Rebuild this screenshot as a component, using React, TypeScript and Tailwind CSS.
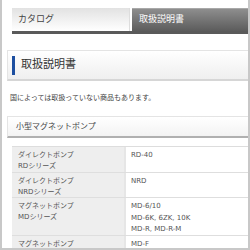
import React from 'react';

const rows = [
  { name: ['ダイレクトポンプ', 'RDシリーズ'], models: ['RD-40'], h: 'h-[26px]' },
  { name: ['ダイレクトポンプ', 'NRDシリーズ'], models: ['NRD'], h: 'h-[25px]' },
  { name: ['マグネットポンプ', 'MDシリーズ'], models: ['MD-6/10', 'MD-6K, 6ZK, 10K', 'MD-R, MD-R-M'], h: 'h-[38px]' },
  { name: ['マグネットポンプ'], models: ['MD-F'], h: 'h-[27px]' },
];

const App: React.FC = () => {
  return (
    <div className="w-[250px] h-[250px] overflow-hidden bg-white border-2 border-t-0 border-[#c8c8c8] font-['DejaVu_Sans','Noto_Sans_CJK_JP',sans-serif] text-[#555]">
      <div className="pl-[10px] pt-[8px]">
        <div className="flex gap-[2px] border-b-[3px] border-[#5a5a5a]">
          <div className="w-[118px] h-[23px] flex items-center pl-[6px] text-[9px] text-[#444] bg-gradient-to-b from-[#e2e2e2] to-white border-r border-[#ddd]">
            カタログ
          </div>
          <div className="flex-1 h-[23px] flex items-center pl-[7px] text-[9px] text-white bg-gradient-to-b from-[#8e8e8e] to-[#5c5c5c] border-t border-[#a8a8a8]">
            取扱説明書
          </div>
        </div>
      </div>

      <div className="ml-[5px] mt-[16px] h-[31px] flex items-center border-t border-b-2 border-t-[#e4e4e4] border-b-[#d6d6d6] border-l border-l-[#e4e4e4] bg-gradient-to-b from-white to-[#efefef]">
        <div className="ml-[4px] w-[3px] h-[19px] bg-[#1d4fa0]" />
        <div className="ml-[6px] text-[11px] text-[#333]">取扱説明書</div>
      </div>

      <p className="ml-[8px] mt-[12px] text-[7px] leading-[10px] text-[#444]">
        国によっては取扱っていない商品もあります。
      </p>

      <div className="ml-[5px] mt-[13px] h-[22px] flex items-center pl-[8px] text-[8px] text-[#444] border-t border-l border-[#e4e4e4] border-b-2 border-b-[#b0b0b0] bg-gradient-to-b from-white to-[#f3f3f3]">
        小型マグネットポンプ
      </div>

      <div className="ml-[10px] mt-[8px] border-t border-[#ddd]">
        {rows.map((r, i) => (
          <div key={i} className={`flex ${r.h} border-b border-[#dedede]`}>
            <div className="w-[112px] shrink-0 bg-[#eeeeee] pl-[6px] pt-[3px] text-[7px] leading-[11px]">
              {r.name.map((t, j) => (
                <div key={j}>{t}</div>
              ))}
            </div>
            <div className="w-[2px] bg-[#e6e6e6]" />
            <div className="flex-1 pl-[5px] pt-[3px] text-[7px] leading-[11.5px]">
              {r.models.map((t, j) => (
                <div key={j}>{t}</div>
              ))}
            </div>
          </div>
        ))}
      </div>
    </div>
  );
};

export default App;
